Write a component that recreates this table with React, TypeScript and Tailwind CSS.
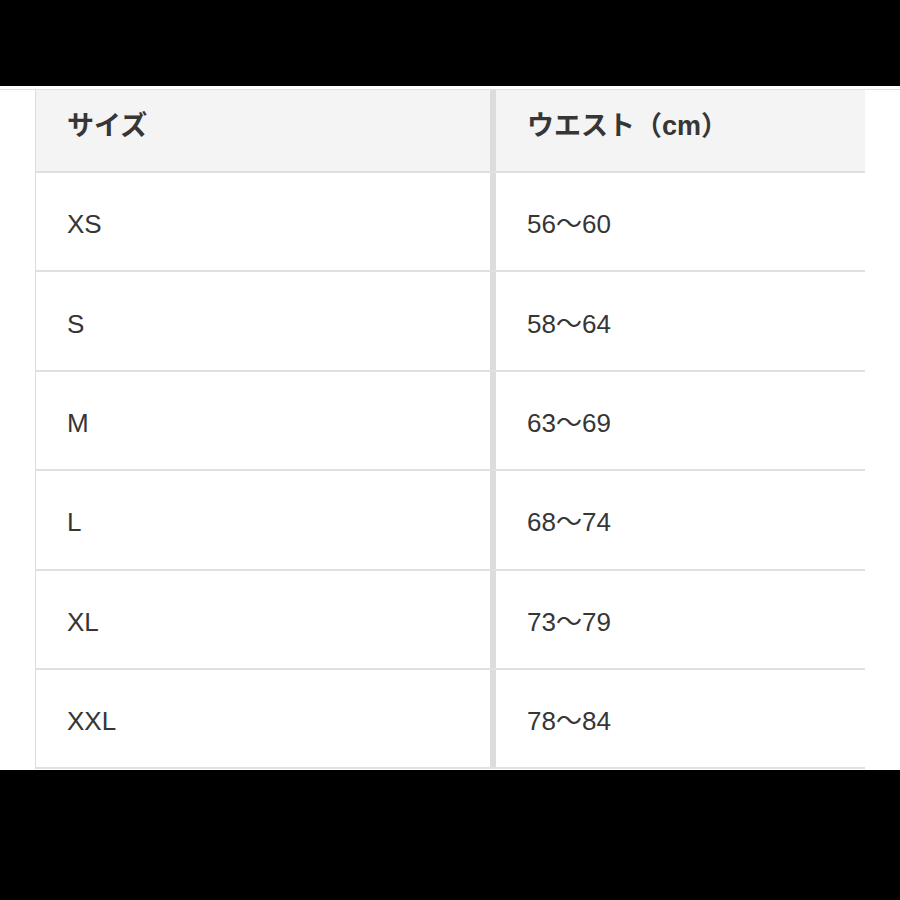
const ROWS = [
  ["XS", "56〜60"],
  ["S", "58〜64"],
  ["M", "63〜69"],
  ["L", "68〜74"],
  ["XL", "73〜79"],
  ["XXL", "78〜84"],
];

export default function App() {
  return (
    <div
      className="w-[900px] h-[900px] bg-black flex flex-col text-[#363636]"
      style={{ fontFamily: '"Liberation Sans", "Noto Sans CJK JP", sans-serif' }}
    >
      <div className="h-[86px] shrink-0 bg-black" />
      <div className="h-[684px] shrink-0 bg-white flex flex-col pt-[3px]">
        <div className="h-[1px] bg-[#e2e2e2]" />
        <div className="flex pl-[35px] pr-[35px]">
          <div className="flex flex-col w-[830px] border-l border-[#dcdcdc]">
            {/* header */}
            <div className="flex h-[83px] border-b-2 border-[#e0e0e0] bg-[#f4f4f4]">
              <div className="w-[454px] flex items-center pl-[31px] pb-[8px] text-[27px] font-bold">
                サイズ
              </div>
              <div className="w-[6px] bg-[#dcdcdc]" />
              <div className="flex-1 flex items-center pl-[31px] pb-[8px] text-[27px] font-bold">
                ウエスト（cm）
              </div>
            </div>
            {ROWS.map(([size, waist]) => (
              <div key={size} className="flex h-[99.4px] border-b-2 border-[#e0e0e0]">
                <div className="w-[454px] flex items-center pl-[31px] pt-[6px] text-[26px]">
                  {size}
                </div>
                <div className="w-[6px] bg-[#dcdcdc]" />
                <div className="flex-1 flex items-center pl-[31px] pt-[6px] text-[26px]">
                  {waist}
                </div>
              </div>
            ))}
          </div>
        </div>
      </div>
      <div className="flex-1 bg-black" />
    </div>
  );
}
